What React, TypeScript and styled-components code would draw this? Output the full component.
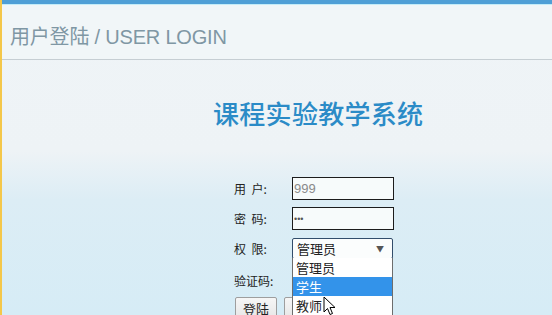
import React from 'react';
import styled, {createGlobalStyle} from 'styled-components';

const GlobalStyle = createGlobalStyle`
  html, body {
    margin: 0;
    padding: 0;
    overflow: hidden;
  }
  body {
    font-family: "Liberation Sans", "Noto Sans CJK SC", sans-serif;
  }
`;

const CJK = '"Noto Sans CJK SC", "Liberation Sans", sans-serif';

const Page = styled.div`
  position: relative;
  width: 552px;
  height: 315px;
  overflow: hidden;
  box-sizing: border-box;
  border-left: 2px solid #f4c74a;
  display: flex;
  flex-direction: column;
  background: linear-gradient(180deg, #eff4f7 0px, #eef3f6 150px, #dcedf5 200px, #d6ecf6 315px);
`;

const TopBar = styled.div`
  height: 4px;
  flex: none;
  background: #4f9fd6;
  border-bottom: 1px solid #c4ecf8;
`;

const Header = styled.div`
  height: 55px;
  flex: none;
  box-sizing: border-box;
  display: flex;
  align-items: center;
  padding: 6px 0 0 8px;
  background: #f1f6f8;
  border-bottom: 1px solid #c6ced3;
`;

const HeaderTitle = styled.div`
  font-size: 20px;
  color: #7f97a4;
  letter-spacing: -0.2px;
`;

const Main = styled.div`
  flex: 1;
  display: flex;
  flex-direction: column;
  padding-left: 211px;
`;

const SystemTitle = styled.h1`
  margin: 38px 0 0;
  font-family: ${CJK};
  font-size: 26px;
  line-height: 30px;
  font-weight: 500;
  color: #2b8bc7;
  letter-spacing: 0.3px;
`;

const Form = styled.div`
  margin: 49px 0 0 21px;
  display: flex;
  flex-direction: column;
`;

const Row = styled.div<{h: number; gap: number}>`
  display: flex;
  align-items: center;
  height: ${p => p.h}px;
  margin-bottom: ${p => p.gap}px;
`;

const Label = styled.span`
  width: 58px;
  flex: none;
  font-family: ${CJK};
  font-size: 12px;
  color: #222;
  white-space: pre;
`;

const TextInput = styled.div<{secret?: boolean}>`
  width: 102px;
  height: 23px;
  box-sizing: border-box;
  border: 1px solid #1c1c1c;
  background: #f7fbfb;
  display: flex;
  align-items: center;
  padding-left: 1px;
  font-size: ${p => (p.secret ? 9 : 13)}px;
  color: ${p => (p.secret ? '#555' : '#8a8a8a')};
`;

const SelectWrap = styled.div`
  position: relative;
`;

const SelectBox = styled.div`
  width: 101px;
  height: 21px;
  box-sizing: border-box;
  border: 1px solid #324d6b;
  border-radius: 2px;
  background: #fbfdfd;
  display: flex;
  align-items: center;
  justify-content: space-between;
  padding: 0 8px 0 4px;
  font-family: ${CJK};
  font-size: 13px;
  color: #222;
`;

const Arrow = styled.span`
  font-size: 8px;
  color: #555;
`;

const Menu = styled.div`
  position: absolute;
  top: 20px;
  left: 0;
  width: 101px;
  box-sizing: border-box;
  border: 1px solid #6d6d6d;
  border-top: none;
  background: #fff;
  z-index: 2;
`;

const Option = styled.div<{active?: boolean}>`
  height: 19px;
  line-height: 19px;
  padding-left: 3px;
  font-family: ${CJK};
  font-size: 13px;
  color: ${p => (p.active ? '#fff' : '#222')};
  background: ${p => (p.active ? '#3393ea' : '#fff')};
`;

const Buttons = styled.div`
  display: flex;
  gap: 7px;
  margin-left: 1px;
`;

const Button = styled.button`
  width: 42px;
  height: 23px;
  padding: 0;
  border: 1px solid #9e9e9e;
  border-radius: 2px;
  background: linear-gradient(#f6f6f6, #e6e6e6);
  font-family: ${CJK};
  font-size: 13px;
  color: #222;
`;

const Cursor = styled.svg`
  position: absolute;
  left: 321px;
  top: 296px;
  z-index: 3;
`;

export default function App() {
  return (
    <>
      <GlobalStyle/>
      <Page>
        <TopBar/>
        <Header>
          <HeaderTitle>用户登陆 / USER LOGIN</HeaderTitle>
        </Header>
        <Main>
          <SystemTitle>课程实验教学系统</SystemTitle>
          <Form>
            <Row h={23} gap={7}>
              <Label>{'用  户:'}</Label>
              <TextInput>999</TextInput>
            </Row>
            <Row h={23} gap={8}>
              <Label>{'密  码:'}</Label>
              <TextInput secret>•••</TextInput>
            </Row>
            <Row h={21} gap={11}>
              <Label>{'权  限:'}</Label>
              <SelectWrap>
                <SelectBox>
                  管理员
                  <Arrow>▼</Arrow>
                </SelectBox>
                <Menu>
                  <Option>管理员</Option>
                  <Option active>学生</Option>
                  <Option>教师</Option>
                </Menu>
              </SelectWrap>
            </Row>
            <Row h={20} gap={7}>
              <Label>验证码:</Label>
            </Row>
            <Buttons>
              <Button>登陆</Button>
              <Button aria-label="重置"/>
            </Buttons>
          </Form>
        </Main>
        <Cursor width="14" height="21" viewBox="0 0 14 21">
          <path d="M1 1 L1 16 L4.5 12.5 L7 18.5 L9.5 17.5 L7 11.5 L12 11.5 Z" fill="#fff" stroke="#000" strokeWidth="1" strokeLinejoin="round"/>
        </Cursor>
      </Page>
    </>
  );
}
